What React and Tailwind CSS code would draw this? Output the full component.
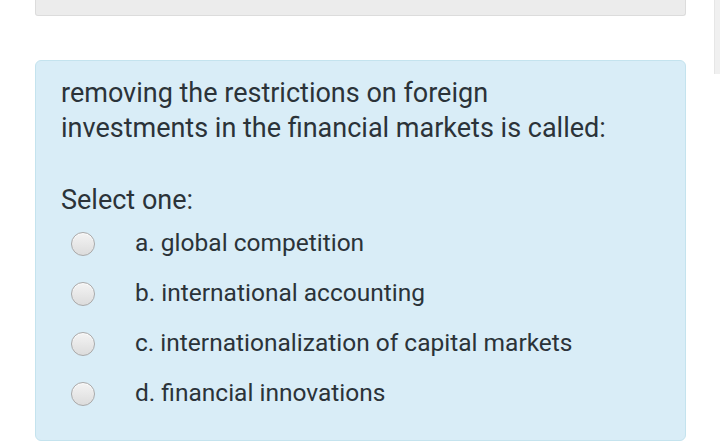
import React from 'react';

const options = [
  'a. global competition',
  'b. international accounting',
  'c. internationalization of capital markets',
  'd. financial innovations',
];

function Radio() {
  return (
    <span className="block w-[24px] h-[24px] rounded-full border border-[#a9a9a9] bg-gradient-to-b from-[#f4f4f4] to-[#dcdcdc] shadow-[inset_0_1px_1px_rgba(255,255,255,0.8)]" />
  );
}

export default function App() {
  return (
    <div className="w-[720px] h-[444px] bg-white overflow-hidden font-['Roboto',sans-serif] flex">
      <div className="w-[714px] pl-[35px] pr-[28px]">
        {/* previous question, cut off */}
        <div className="h-[16px] bg-[#ececec] border border-t-0 border-[#dcdcdc] rounded-b-[3px]" />

        {/* question card */}
        <div className="mt-[44px] h-[381px] bg-[#d9edf7] border border-[#c4e3ee] rounded-[6px] pl-[25px] pt-[15px]">
          <p className="text-[27px] leading-[35px] text-[#2b3339]">
            removing the restrictions on foreign
            <br />
            investments in the financial markets is called:
          </p>
          <p className="mt-[38px] text-[27px] leading-[32px] text-[#2b3339]">Select one:</p>
          <div className="mt-[12px] flex flex-col gap-[19px]">
            {options.map((o) => (
              <label key={o} className="flex items-center h-[31px]">
                <span className="ml-[10px] mr-[40px]">
                  <Radio />
                </span>
                <span className="text-[24.5px] text-[#2b3339]">{o}</span>
              </label>
            ))}
          </div>
        </div>
      </div>
      <div className="w-[6px] h-[74px] bg-[#f0f0f0] border-l border-[#e6e6e6]" />
    </div>
  );
}
